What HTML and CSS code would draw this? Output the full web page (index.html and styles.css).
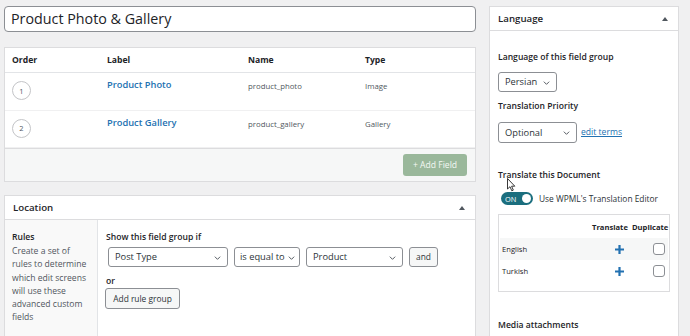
FILE: index.html
```html
<!DOCTYPE html>
<html>
<head>
<meta charset="utf-8">
<link rel="stylesheet" href="styles.css">
</head>
<body>
<div class="page">
  <main class="main">
    <div class="title-input">Product Photo &amp; Gallery</div>

    <section class="box fields">
      <div class="frow fhead">
        <div>Order</div><div>Label</div><div>Name</div><div>Type</div>
      </div>
      <div class="frow fitem">
        <div><span class="num">1</span></div>
        <div><a class="flabel">Product Photo</a></div>
        <div class="small">product_photo</div>
        <div class="small">Image</div>
      </div>
      <div class="frow fitem">
        <div><span class="num">2</span></div>
        <div><a class="flabel">Product Gallery</a></div>
        <div class="small">product_gallery</div>
        <div class="small">Gallery</div>
      </div>
      <div class="ffoot"><span class="btn-add">+ Add Field</span></div>
    </section>

    <section class="box location">
      <div class="box-head"><span>Location</span><span class="tri"></span></div>
      <div class="loc-body">
        <div class="loc-side">
          <div class="b">Rules</div>
          <p>Create a set of rules to determine which edit screens will use these advanced custom fields</p>
        </div>
        <div class="loc-main">
          <div class="b">Show this field group if</div>
          <div class="rule">
            <span class="sel w1">Post Type<svg class="chev" viewBox="0 0 10 6"><path d="M1 1l4 4 4-4" fill="none" stroke="#3c434a" stroke-width="1.3"/></svg></span>
            <span class="sel w2">is equal to<svg class="chev" viewBox="0 0 10 6"><path d="M1 1l4 4 4-4" fill="none" stroke="#3c434a" stroke-width="1.3"/></svg></span>
            <span class="sel w3">Product<svg class="chev" viewBox="0 0 10 6"><path d="M1 1l4 4 4-4" fill="none" stroke="#3c434a" stroke-width="1.3"/></svg></span>
            <span class="btn-sm">and</span>
          </div>
          <div class="b or">or</div>
          <span class="btn-sm group">Add rule group</span>
        </div>
      </div>
    </section>
  </main>

  <aside class="side">
    <section class="box lang">
      <div class="box-head"><span>Language</span><span class="tri"></span></div>
      <div class="lang-body">
        <div class="b lbl1">Language of this field group</div>
        <span class="sel w4">Persian<svg class="chev" viewBox="0 0 10 6"><path d="M1 1l4 4 4-4" fill="none" stroke="#3c434a" stroke-width="1.3"/></svg></span>
        <div class="b lbl2">Translation Priority</div>
        <div class="prio">
          <span class="sel w5">Optional<svg class="chev" viewBox="0 0 10 6"><path d="M1 1l4 4 4-4" fill="none" stroke="#3c434a" stroke-width="1.3"/></svg></span>
          <a class="link">edit terms</a>
        </div>
        <div class="b lbl3">Translate this Document</div>
        <div class="toggle-row">
          <span class="toggle"><span class="on">ON</span><span class="knob"></span></span>
          <span>Use WPML's Translation Editor</span>
        </div>
        <div class="ttable">
          <div class="trow thead"><span></span><span>Translate</span><span>Duplicate</span></div>
          <div class="trow alt"><span>English</span><span class="plus"><svg viewBox="0 0 9 9" width="9" height="9"><path d="M4.5 0v9M0 4.5h9" stroke="#2271b1" stroke-width="2.2"/></svg></span><span class="cb"></span></div>
          <div class="trow"><span>Turkish</span><span class="plus"><svg viewBox="0 0 9 9" width="9" height="9"><path d="M4.5 0v9M0 4.5h9" stroke="#2271b1" stroke-width="2.2"/></svg></span><span class="cb"></span></div>
        </div>
        <div class="b lbl4">Media attachments</div>
      </div>
    </section>
  </aside>
</div>
<svg class="cursor" viewBox="0 0 9 14" width="9" height="14"><path d="M0.5 0.5 L0.5 11 L3 8.7 L4.8 12.8 L6.3 12.1 L4.6 8.2 L7.8 8.2 Z" fill="#fff" stroke="#222" stroke-width="0.9"/></svg>
</body>
</html>
```

FILE: styles.css
```css
* { box-sizing: border-box; }
html, body { margin: 0; padding: 0; }
body {
  background: #f0f0f1;
  font-family: "Open Sans", "Noto Sans", sans-serif;
  font-size: 8.6px;
  line-height: 12px;
  color: #1d2327;
  width: 690px;
  height: 336px;
  overflow: hidden;
  position: relative;
}
.page {
  display: grid;
  grid-template-columns: 472px 190px;
  column-gap: 13px;
  padding: 6px 0 0 4px;
}
.b { font-weight: 600; }
.box {
  background: #fff;
  border: 1px solid #dcdcde;
}
.title-input {
  height: 26px;
  border: 1px solid #8c8f94;
  border-radius: 4px;
  background: #fff;
  font-size: 14.3px;
  line-height: 24px;
  padding-left: 6px;
  color: #1d2327;
}
.fields { margin-top: 15px; }
.frow {
  display: grid;
  grid-template-columns: 95px 141px 117px 1fr;
  padding-left: 7px;
}
.fhead {
  height: 25px;
  align-items: center;
  font-weight: 700;
  border-bottom: 1px solid #e2e4e7;
}
.fitem {
  height: 37.5px;
  padding-top: 6px;
  border-bottom: 1px solid #f0f0f1;
}
.fitem:last-of-type { border-bottom: 0; }
.fitem .small { padding-top: 1px; font-size: 7.8px; color: #50575e; }
.flabel { color: #2271b1; font-size: 9.3px; font-weight: 600; }
.num {
  display: inline-flex;
  align-items: center;
  justify-content: center;
  width: 19px;
  height: 19px;
  margin-top: 2px;
  border: 1px solid #c3c4c7;
  border-radius: 50%;
  font-size: 7.5px;
  color: #50575e;
}
.ffoot {
  height: 33px;
  background: #f6f7f7;
  border-top: 1px solid #dcdcde;
  display: flex;
  justify-content: flex-end;
  align-items: flex-start;
  padding: 5px 8px 0 0;
}
.btn-add {
  width: 64px;
  height: 22px;
  border-radius: 3px;
  background: #9ab89b;
  color: #f4f8f4;
  font-size: 8.6px;
  display: flex;
  align-items: center;
  justify-content: center;
}
.location { margin-top: 13px; }
.box-head {
  height: 24px;
  border-bottom: 1px solid #dcdcde;
  display: flex;
  align-items: center;
  justify-content: space-between;
  padding: 0 9px 0 8px;
  font-size: 9.7px;
  font-weight: 600;
}
.tri {
  width: 0; height: 0;
  border-left: 3px solid transparent;
  border-right: 3px solid transparent;
  border-bottom: 4px solid #50575e;
  margin-right: 1px;
}
.loc-body {
  display: grid;
  grid-template-columns: 93px 1fr;
  height: 116px;
}
.loc-side {
  background: #f9f9f9;
  border-right: 1px solid #e2e4e7;
  padding: 11px 6px 0 7px;
}
.loc-side p {
  margin: 2px 0 0;
  color: #50575e;
  line-height: 13.3px;
}
.loc-main { padding: 11px 0 0 8px; }
.rule {
  display: flex;
  gap: 6px;
  margin-top: 4px;
  padding-left: 2px;
}
.sel {
  position: relative;
  display: inline-flex;
  align-items: center;
  height: 20px;
  border: 1px solid #8c8f94;
  border-radius: 3px;
  background: #fff;
  padding-left: 6px;
  font-size: 9.3px;
  color: #2c3338;
}
.chev {
  position: absolute;
  right: 6px;
  top: 8px;
  width: 7px;
  height: 4px;
}
.w1 { width: 120px; }
.w2 { width: 66px; padding-left: 5px; }
.w2 .chev { right: 4px; }
.w3 { width: 97px; }
.w4 { width: 59px; margin-top: 9px; }
.w5 { width: 79px; height: 21px; }
.btn-sm {
  display: inline-flex;
  align-items: center;
  justify-content: center;
  height: 20px;
  border: 1px solid #8c8f94;
  border-radius: 3px;
  background: #f6f7f7;
  font-size: 8.4px;
  color: #2c3338;
}
.rule .btn-sm { width: 29px; }
.or { margin-top: 8px; }
.group { width: 75px; height: 21px; margin-top: 1px; margin-left: -1px; }
.side { min-width: 0; }
.lang { height: 340px; }
.lang-body { padding: 0 0 0 8px; }
.lbl1 { margin-top: 20px; }
.lbl2 { margin-top: 8px; }
.prio {
  display: flex;
  align-items: center;
  gap: 4px;
  margin-top: 10px;
}
.link { color: #2271b1; text-decoration: underline; font-size: 8.6px; margin-top: -2px; }
.lbl3 { margin-top: 26px; }
.toggle-row {
  display: flex;
  align-items: center;
  gap: 6px;
  margin-top: 11px;
  padding-left: 3px;
  color: #2c3338;
  font-size: 8.4px;
}
.toggle {
  width: 32px;
  height: 13px;
  border-radius: 7px;
  background: #1b6e7e;
  display: flex;
  align-items: center;
  justify-content: space-between;
  padding: 0 2px 0 4px;
}
.on { color: #fff; font-size: 7.4px; }
.knob { width: 9px; height: 9px; border-radius: 50%; background: #fff; }
.ttable {
  margin-top: 9px;
  width: 172px;
  height: 78px;
  border: 1px solid #dcdcde;
  padding: 0 1px;
}
.trow {
  display: grid;
  grid-template-columns: 92px 38px 1fr;
  align-items: center;
  height: 22px;
  font-size: 7.6px;
  padding-left: 2px;
}
.thead { font-weight: 700; height: 23px; }
.thead span:nth-child(2) { margin-left: -2px; }
.alt { background: #f6f7f7; }
.plus {
  display: flex;
  padding-left: 21px;
}
.cb {
  width: 12px;
  height: 12px;
  border: 1px solid #8c8f94;
  border-radius: 3px;
  background: #fff;
  margin-left: 21px;
}
.lbl4 { margin-top: 27px; }
.cursor {
  position: absolute;
  left: 507px;
  top: 178px;
}
```
